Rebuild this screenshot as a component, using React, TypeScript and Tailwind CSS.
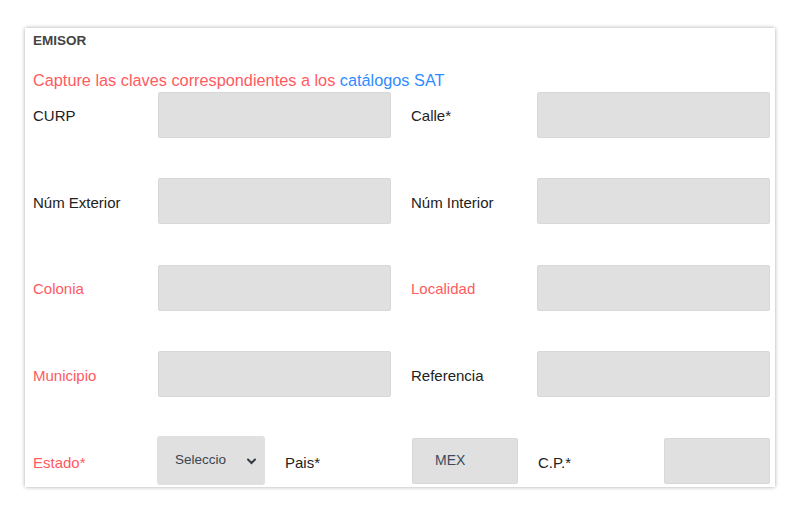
import React from 'react';

const inputCls = 'h-[46px] bg-[#e1e0e1] border border-[#d9d8d9] rounded-[2px]';

function Label({ text, red = false, className = '' }: { text: string; red?: boolean; className?: string }) {
  return (
    <span className={`pt-[4px] text-[15px] ${red ? 'text-[#ff5a5f]' : 'text-[#222]'} ${className}`}>{text}</span>
  );
}

function FieldRow({ left, leftRed, right, rightRed }: { left: string; leftRed?: boolean; right: string; rightRed?: boolean }) {
  return (
    <div className="flex items-center h-[47px]">
      <Label text={left} red={leftRed} className="w-[125px]" />
      <div className={`${inputCls} w-[233px]`} />
      <Label text={right} red={rightRed} className="ml-[20px] w-[126px]" />
      <div className={`${inputCls} w-[233px]`} />
    </div>
  );
}

export default function App() {
  return (
    <div className="w-[800px] h-[515px] bg-white pt-[28px] pl-[25px]" style={{ fontFamily: '"Liberation Sans", Arial, sans-serif' }}>
      <div className="w-[750px] h-[459px] bg-white shadow-[0_0_4px_rgba(0,0,0,0.35)] pl-[8px] pr-[5px] pt-[5px]">
        <div className="text-[13.5px] font-bold text-[#444] leading-[16px]">EMISOR</div>
        <div className="mt-[21px] text-[16.3px] leading-[20px] text-[#ff5a5f]">
          Capture las claves correspondientes a los <span className="text-[#2f8cff]">catálogos SAT</span>
        </div>
        <div className="mt-[1px] flex flex-col gap-[39.5px]">
          <FieldRow left="CURP" right="Calle*" />
          <FieldRow left="Núm Exterior" right="Núm Interior" />
          <FieldRow left="Colonia" leftRed right="Localidad" rightRed />
          <FieldRow left="Municipio" leftRed right="Referencia" />
          <div className="flex items-center h-[49px] -mt-[1px]">
            <Label text="Estado*" red className="w-[124px] pt-[6px]" />
            <div className="w-[108px] h-[49px] bg-[#e1e0e1] rounded-[3px] flex items-center pl-[18px] pr-[8px] text-[13.5px] text-[#3a4450]">
              <span className="flex-1">Seleccio</span>
              <svg width="11" height="8" viewBox="0 0 11 8" className="mt-[1px]">
                <path d="M2 2.5 L5.5 6 L9 2.5" stroke="#333a44" strokeWidth="2" fill="none" strokeLinecap="round" />
              </svg>
            </div>
            <Label text="Pais*" className="ml-[20px] w-[127px] pt-[6px]" />
            <div className="w-[106px] h-[46px] bg-[#e1e0e1] border border-[#d9d8d9] rounded-[2px] flex items-center pl-[22px] text-[14px] text-[#3a4a5a]">MEX</div>
            <Label text="C.P.*" className="ml-[20px] w-[126px] pt-[6px]" />
            <div className={`${inputCls} w-[106px]`} />
          </div>
        </div>
      </div>
    </div>
  );
}
